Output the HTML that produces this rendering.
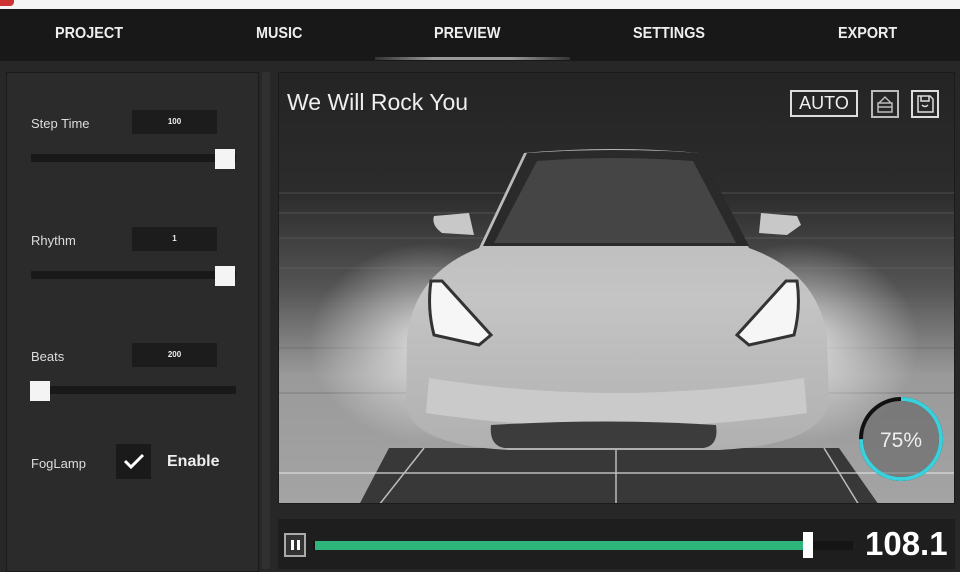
<!DOCTYPE html>
<html><head><meta charset="utf-8"><style>
*{margin:0;padding:0;box-sizing:border-box}
body{width:960px;height:569px;overflow:hidden;background:#272727;font-family:"Liberation Sans",sans-serif;position:relative}
.top{position:absolute;left:0;top:0;width:960px;height:9px;background:#f4f4f4}
.nav{position:absolute;left:0;top:9px;width:960px;height:52px;background:#181818}
.nav span{position:absolute;top:16px;color:#eee;font-weight:bold;font-size:16px;transform:scaleX(.9);transform-origin:left}
.ul{position:absolute;left:375px;top:57px;width:195px;height:3px;background:linear-gradient(90deg,#333,#999 30%,#999 70%,#333)}
.left{position:absolute;left:6px;top:72px;width:253px;height:500px;background:#2b2b2b;border:1px solid #1a1a1a}
.lbl{position:absolute;color:#ddd;font-size:13px}
.box{position:absolute;width:85px;height:24px;background:#1c1c1c;color:#eee;font-size:8px;font-weight:bold;text-align:center;line-height:24px}
.trk{position:absolute;height:8px;background:#191919}
.knob{position:absolute;width:20px;height:20px;background:#f4f4f4}
.prev{position:absolute;left:278px;top:72px;width:677px;height:432px;background:#242424;border:1px solid #1b1b1b;overflow:hidden}
.bar{position:absolute;left:278px;top:519px;width:677px;height:50px;background:#1e1e1e}
</style></head><body>
<div class="top"><div style="position:absolute;left:0;top:0;width:14px;height:6px;background:#c33;border-radius:0 0 4px 0"></div></div>
<div class="nav">
<span style="left:55px">PROJECT</span><span style="left:256px">MUSIC</span><span style="left:434px">PREVIEW</span><span style="left:633px">SETTINGS</span><span style="left:838px">EXPORT</span>
</div>
<div class="ul"></div>
<div style="position:absolute;left:262px;top:72px;width:8px;height:497px;background:#303030"></div>
<div class="left">
<div class="lbl" style="left:24px;top:43px">Step Time</div>
<div class="box" style="left:125px;top:37px">100</div>
<div class="trk" style="left:24px;top:81px;width:205px"></div>
<div class="knob" style="left:208px;top:76px"></div>
<div class="lbl" style="left:24px;top:160px">Rhythm</div>
<div class="box" style="left:125px;top:154px">1</div>
<div class="trk" style="left:24px;top:198px;width:205px"></div>
<div class="knob" style="left:208px;top:193px"></div>
<div class="lbl" style="left:24px;top:276px">Beats</div>
<div class="box" style="left:125px;top:270px">200</div>
<div class="trk" style="left:24px;top:313px;width:205px"></div>
<div class="knob" style="left:23px;top:308px"></div>
<div class="lbl" style="left:24px;top:383px">FogLamp</div>
<div style="position:absolute;left:109px;top:371px;width:35px;height:35px;background:#1a1a1a"></div>
<svg style="position:absolute;left:115px;top:378px" width="24" height="20"><path d="M3 10 L9 16 L21 4" stroke="#fff" stroke-width="3" fill="none"/></svg>
<div class="lbl" style="left:160px;top:380px;font-weight:bold;font-size:16px;color:#eee">Enable</div>
</div>
<div class="prev">
<svg width="677" height="432" style="position:absolute;left:0;top:0">
<defs>
<linearGradient id="bg" x1="0" y1="0" x2="0" y2="1"><stop offset="0" stop-color="#242424"/><stop offset=".28" stop-color="#2c2c2c"/><stop offset=".5" stop-color="#555"/><stop offset=".7" stop-color="#9a9a9a"/><stop offset="1" stop-color="#a4a4a4"/></linearGradient>
<linearGradient id="body" x1="0" y1="0" x2="0" y2="1"><stop offset="0" stop-color="#b8b8b8"/><stop offset=".5" stop-color="#c4c4c4"/><stop offset="1" stop-color="#b0b0b0"/></linearGradient>
<radialGradient id="glow" cx=".5" cy=".5" r=".5"><stop offset="0" stop-color="#fff" stop-opacity=".75"/><stop offset="1" stop-color="#fff" stop-opacity="0"/></radialGradient>
</defs>
<rect width="677" height="432" fill="url(#bg)"/>
<g stroke="#666" stroke-width="1" opacity=".6">
<line x1="0" y1="120" x2="677" y2="120"/><line x1="0" y1="140" x2="677" y2="140"/><line x1="0" y1="165" x2="677" y2="165"/><line x1="0" y1="195" x2="677" y2="195"/><line x1="0" y1="230" x2="677" y2="230"/><line x1="0" y1="275" x2="677" y2="275"/><line x1="0" y1="320" x2="677" y2="320"/>
</g>
<ellipse cx="150" cy="270" rx="120" ry="100" fill="url(#glow)"/>
<ellipse cx="520" cy="270" rx="120" ry="100" fill="url(#glow)"/>
<path d="M110 375 L560 375 L600 432 L80 432Z" fill="#2c2c2c" opacity=".9"/>
<g stroke="#ddd" stroke-width="1.5" opacity=".8"><line x1="0" y1="400" x2="677" y2="400"/><line x1="337" y1="375" x2="337" y2="432"/><line x1="145" y1="375" x2="100" y2="432"/><line x1="545" y1="375" x2="580" y2="432"/></g>
<path d="M245 80 Q335 72 420 80 L470 175 Q540 200 548 265 L550 330 Q540 372 440 377 L230 377 Q130 372 127 330 L128 265 Q135 200 200 175Z" fill="url(#body)"/>
<path d="M248 80 Q335 74 422 80 L470 173 L204 173Z" fill="#2a2a2a"/>
<path d="M258 88 Q335 82 414 88 L457 170 L215 170Z" fill="#454545"/>
<path d="M155 143 L190 140 L195 162 L163 160 Q152 152 155 143Z" fill="#c8c8c8"/>
<path d="M482 140 L518 143 L522 152 L508 162 L480 160Z" fill="#c8c8c8"/>
<path d="M152 208 L163 208 L212 262 L200 272 L155 262 Q148 235 152 208Z" fill="#f6f6f6" stroke="#333" stroke-width="3"/>
<path d="M518 208 L507 208 L458 262 L470 272 L515 262 Q522 235 518 208Z" fill="#f6f6f6" stroke="#333" stroke-width="3"/>
<path d="M150 305 Q335 335 525 305 L528 340 Q335 368 147 340Z" fill="#cacaca"/>
<path d="M212 352 Q330 345 437 352 Q440 372 425 375 L225 375 Q210 372 212 352Z" fill="#3c3c3c"/>
</svg>
<div style="position:absolute;left:8px;top:16px;color:#eee;font-size:23px">We Will Rock You</div>
<div style="position:absolute;left:511px;top:17px;width:68px;height:27px;border:2px solid #ddd;color:#eee;font-size:18px;text-align:center;line-height:23px">AUTO</div>
<svg style="position:absolute;left:592px;top:17px" width="70" height="28"><rect x="1" y="1" width="26" height="26" fill="none" stroke="#bbb" stroke-width="2"/><path d="M8 13 L14 7 L20 13 M7 13 H21 V22 H7Z M7 17 H21" stroke="#bbb" stroke-width="1.5" fill="none"/><rect x="41" y="1" width="26" height="26" fill="none" stroke="#ddd" stroke-width="2"/><path d="M47 6 H59 L62 9 V22 H47Z M50 6 V11 H58 V6 M51 15 Q54 18 57 15" stroke="#ddd" stroke-width="1.5" fill="none"/></svg>
<svg style="position:absolute;left:576px;top:320px" width="92" height="92"><circle cx="46" cy="46" r="40" fill="#555" fill-opacity=".5" stroke="#111" stroke-width="4"/><circle cx="46" cy="46" r="40" fill="none" stroke="#3ad0dc" stroke-width="4" stroke-dasharray="188 251" transform="rotate(-90 46 46)"/><text x="46" y="54" fill="#eee" font-size="21" text-anchor="middle" font-family="Liberation Sans">75%</text></svg>
</div>
<div class="bar">
<div style="position:absolute;left:6px;top:14px;width:22px;height:24px;border:2px solid #aaa;background:#333"></div>
<div style="position:absolute;left:13px;top:21px;width:3px;height:10px;background:#fff"></div><div style="position:absolute;left:19px;top:21px;width:3px;height:10px;background:#fff"></div>
<div style="position:absolute;left:35px;top:22px;width:540px;height:9px;background:#151515"></div>
<div style="position:absolute;left:37px;top:22px;width:492px;height:9px;background:#2eb57c"></div>
<div style="position:absolute;left:525px;top:13px;width:10px;height:26px;background:#fff"></div>
<div style="position:absolute;left:587px;top:6px;color:#fff;font-size:33px;font-weight:bold">108.1</div>
</div>
</body></html>
